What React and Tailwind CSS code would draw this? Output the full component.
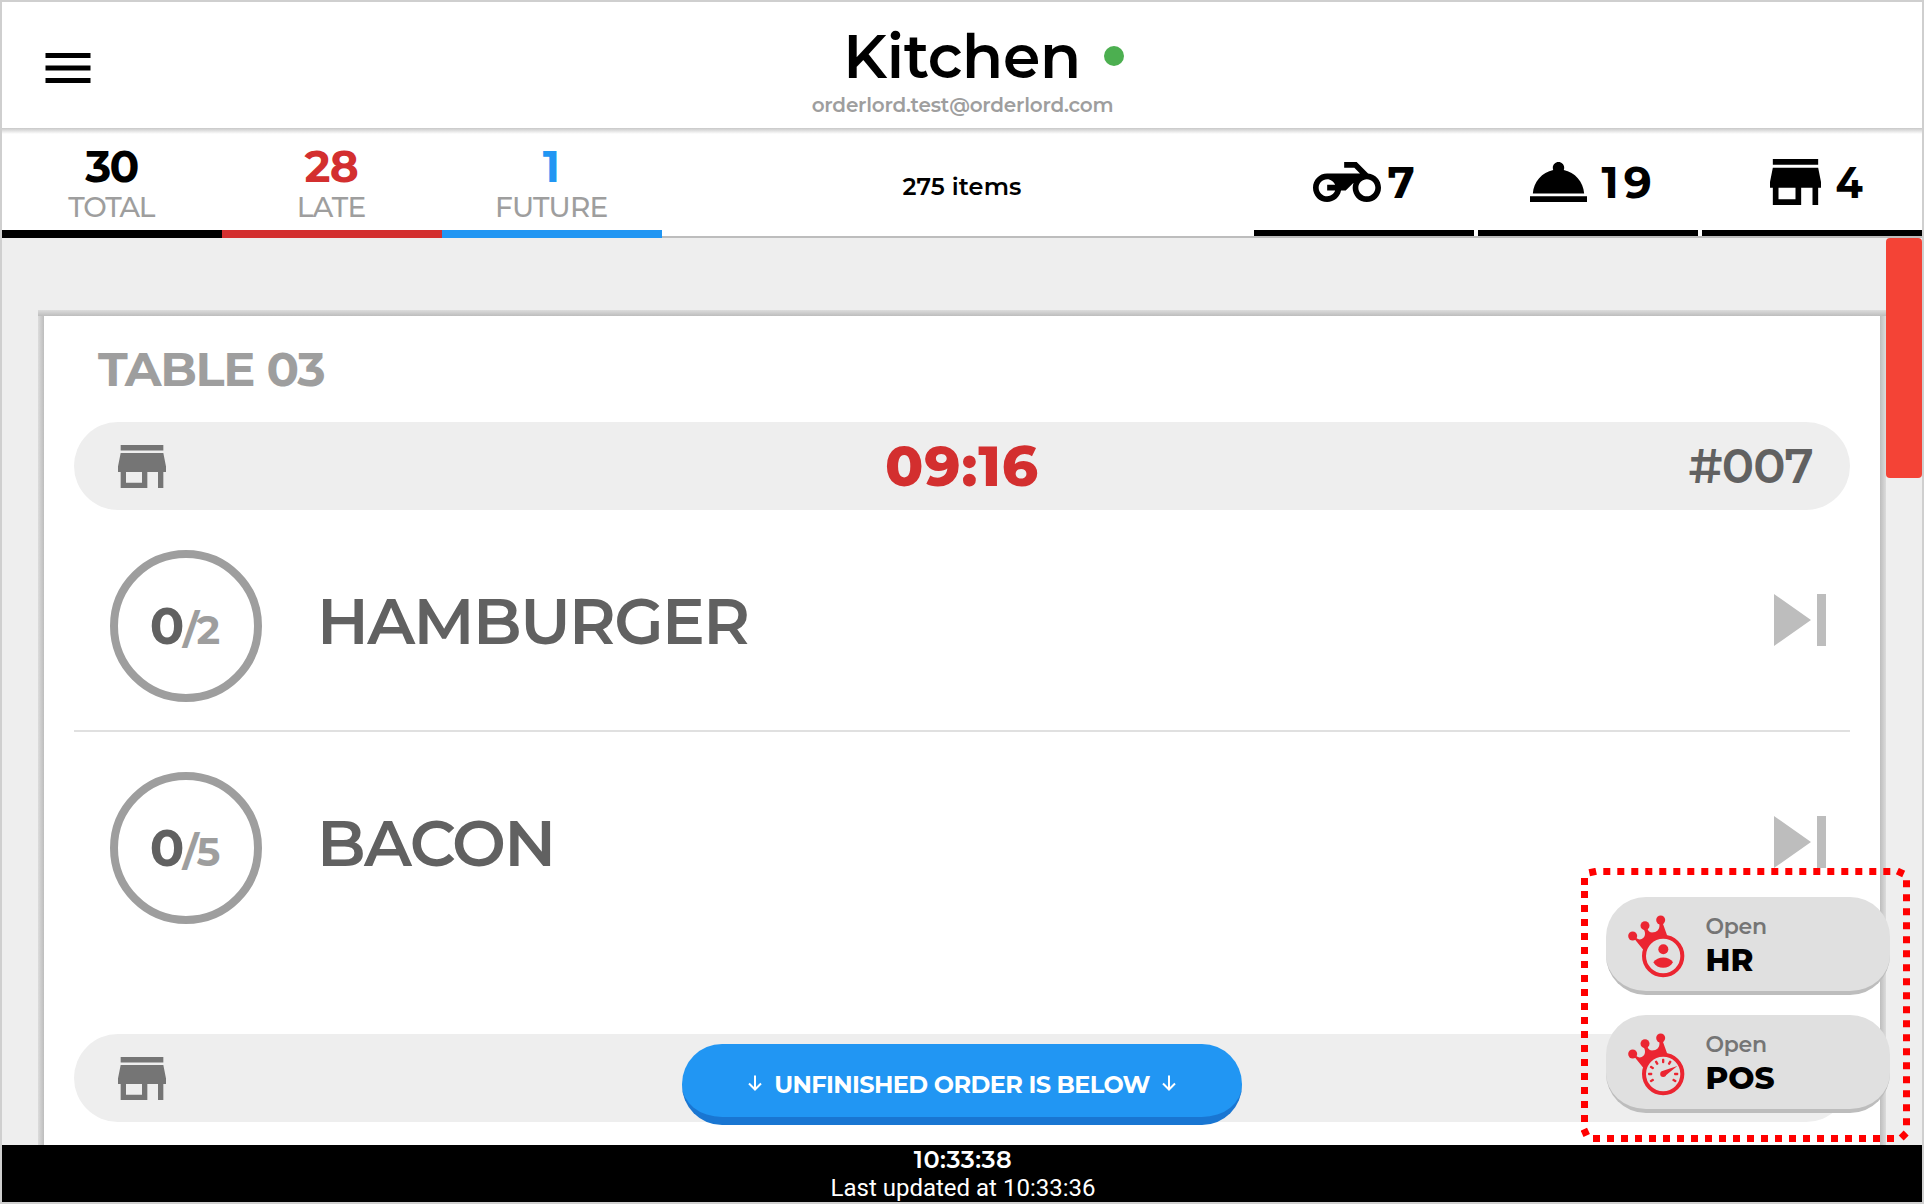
import React from 'react';

const STORE =
  'M20 4H4v2h16V4zm1 10v-2l-1-5H4l-1 5v2h1v6h10v-6h4v6h2v-6h1zm-9 4H6v-4h6v4z';

function StoreIcon({ className }) {
  return (
    <svg viewBox="3 4 18 16" preserveAspectRatio="none" className={className} fill="currentColor">
      <path d={STORE} />
    </svg>
  );
}

function MotorcycleIcon({ className }) {
  return (
    <svg viewBox="0 5 24 14" preserveAspectRatio="none" className={className} fill="currentColor">
      <path d="M19.44 9.03L15.41 5H11v2h3.59l2 2H5c-2.8 0-5 2.2-5 5s2.2 5 5 5c2.46 0 4.45-1.69 4.9-4h1.65l2.77-2.77c-.21.54-.32 1.14-.32 1.77 0 2.8 2.2 5 5 5s5-2.2 5-5c0-2.65-1.97-4.77-4.56-4.97zM7.82 15C7.4 16.15 6.28 17 5 17c-1.63 0-3-1.37-3-3s1.37-3 3-3c1.28 0 2.4.85 2.82 2H5v2h2.82zM19 17c-1.66 0-3-1.34-3-3s1.34-3 3-3 3 1.34 3 3-1.34 3-3 3z" />
    </svg>
  );
}

function RoomServiceIcon({ className }) {
  return (
    <svg viewBox="2 5 20 14" preserveAspectRatio="none" className={className} fill="currentColor">
      <path d="M2 17h20v2H2zm11.84-9.21c.1-.24.16-.51.16-.79 0-1.1-.9-2-2-2s-2 .9-2 2c0 .28.06.55.16.79C6.25 8.6 3.27 11.93 3 16h18c-.27-4.07-3.25-7.4-7.16-8.21z" />
    </svg>
  );
}

function SkipIcon() {
  return (
    <svg viewBox="0 0 52 52" className="mt-[44px] mr-6 ml-auto size-[52px] text-[#bdbdbd]" fill="currentColor">
      <path d="M0 0L37 26L0 52ZM43 0h9v52h-9z" />
    </svg>
  );
}

function ArrowDown() {
  return (
    <svg viewBox="0 0 14 16" className="mt-[31px] h-4 w-3.5" fill="none" stroke="currentColor" strokeWidth="2">
      <path d="M7 0.500v14M1 8.500l6 6 6-6" />
    </svg>
  );
}

function CrownIcon({ children }) {
  return (
    <svg viewBox="203 224 171 189" className="mt-[18px] ml-[21.5px] h-[63px] w-[57px] shrink-0 text-[#eb2531]" fill="currentColor">
      <circle cx="217" cy="287" r="13.5" />
      <circle cx="254" cy="256" r="13.5" />
      <circle cx="301" cy="239" r="13.5" />
      <path d="M222 295L250 330C262 303 290 284 321 287L307 248L297 250C299 263 294 273 280 276C270 278 264 273 262 266L251 268C257 280 254 291 244 296C238 299 231 297 226 291Z" />
      <circle cx="308.5" cy="347" r="57.5" fill="#e0e0e0" stroke="currentColor" strokeWidth="12" />
      {children}
    </svg>
  );
}

function PersonMark() {
  return (
    <>
      <circle cx="309" cy="327" r="15" />
      <path d="M279 365.500C291 346.500 327 346.500 338 365.500C326 387.500 291 387.500 279 365.500Z" />
    </>
  );
}

const TICKS = [150, 180, 210, 240, 270, 300, 0, 30];

function GaugeMark() {
  return (
    <>
      {TICKS.map((a) => (
        <rect key={a} x="341" y="343.500" width="13" height="7" rx="2.500" transform={`rotate(${a} 308.5 347)`} />
      ))}
      <path d="M351 323L304 339L308 353L315 352Z" />
      <circle cx="308.500" cy="347" r="9" />
    </>
  );
}

function StatTab({ value, label, className, tone, tight, labelTight }) {
  return (
    <div className={`flex w-[220px] flex-col items-center border-b-8 pt-2.5 pr-[1.4px] leading-none ${className}`}>
      <div className={`text-[44px] font-bold ${tone} ${tight}`}>{value}</div>
      <div className={`mt-[5px] text-[28px] font-medium text-[#9e9e9e] ${labelTight}`}>{label}</div>
    </div>
  );
}

function OrderBar({ time, number }) {
  return (
    <div className="grid h-[88px] shrink-0 grid-cols-[1fr_auto_1fr] items-center rounded-full bg-[#eeeeee] px-[37px] leading-none">
      <StoreIcon className="ml-[7px] h-[43px] w-12 text-[#757575]" />
      <div className="text-[56px] font-extrabold tracking-[0.9px] text-[#d32f2f]">{time}</div>
      <div className="justify-self-end text-[48px] font-semibold tracking-[-0.8px] text-[#616161]">{number}</div>
    </div>
  );
}

function ItemRow({ total, name, className }) {
  return (
    <div className={`flex shrink-0 items-start pt-10 pl-9 leading-none ${className}`}>
      <div className="flex size-[152px] shrink-0 items-center justify-center rounded-full border-8 border-[#9e9e9e] pt-px pr-1 font-bold">
        <div className="flex items-baseline">
          <span className="text-[51px] tracking-[-1.5px] text-[#616161]">0</span>
          <span className="text-[40px] tracking-[-2px] text-[#9e9e9e]">/{total}</span>
        </div>
      </div>
      <div className="mt-[39px] ml-[55px] text-[64px] font-semibold tracking-[-1.6px] text-[#616161]">{name}</div>
      <SkipIcon />
    </div>
  );
}

function AppButton({ name, children }) {
  return (
    <div className="flex h-[98px] w-[284px] items-start rounded-[40px] border-b-4 border-[#bdbdbd] bg-[#e0e0e0]">
      <CrownIcon>{children}</CrownIcon>
      <div className="pt-[19px] pl-[21px] leading-none">
        <div className="text-[22px] font-semibold tracking-[-0.27px] text-[#757575]">Open</div>
        <div className="mt-[7px] text-[31px] font-extrabold text-black">{name}</div>
      </div>
    </div>
  );
}

function DottedFrame() {
  return (
    <svg viewBox="1581 868 329 274" className="absolute top-[866px] left-[1579px] h-[274px] w-[329px]" fill="none" stroke="#ff0000" strokeWidth="7" strokeDasharray="7 7">
      <path d="M1603.300 871.500H1891M1593 1138.500H1894.500M1584.500 878V885M1584.500 891V1122M1906.500 880.300V1126" />
      <g fill="#ff0000" stroke="none">
        <rect x="1589.200" y="868.500" width="7" height="7" transform="rotate(-12 1592.700 872)" />
        <rect x="1897" y="869" width="7" height="7" transform="rotate(25 1900.500 872.500)" />
        <rect x="1900.200" y="1132" width="7" height="7" transform="rotate(45 1903.700 1135.500)" />
        <rect x="1581.800" y="1128.800" width="7" height="7" transform="rotate(-24 1585.300 1132.300)" />
      </g>
    </svg>
  );
}

export default function App() {
  return (
    <div className="relative flex h-[1204px] w-[1924px] flex-col overflow-hidden border-2 border-[#cfcfcf] bg-white font-['Montserrat',sans-serif] text-black">
      <header className="grid h-[126px] shrink-0 grid-cols-[300px_1fr_300px] leading-none">
        <svg viewBox="0 0 24 24" className="mt-9 ml-9 size-[60px]" fill="currentColor">
          <path d="M3 18h18v-2H3v2zm0-5h18v-2H3v2zm0-7v2h18V6H3z" />
        </svg>
        <div className="flex flex-col items-center pt-[25px]">
          <div className="relative text-[60px] font-semibold tracking-[-0.3px]">
            Kitchen
            <span className="absolute top-[19px] -right-[43px] size-5 rounded-full bg-[#4caf50]" />
          </div>
          <div className="mt-2 pl-px text-[20px] font-semibold tracking-[-0.2px] text-[#9e9e9e]">orderlord.test@orderlord.com</div>
        </div>
      </header>

      <div className="h-1.5 shrink-0 bg-linear-to-b from-[#c8c8c8] to-white" />
      <div className="flex h-[104px] shrink-0">
        <StatTab value="30" label="TOTAL" className="border-black" tone="text-black" tight="tracking-[-1.8px]" labelTight="tracking-[-1.2px]" />
        <StatTab value="28" label="LATE" className="border-[#d32f2f]" tone="text-[#d32f2f]" tight="tracking-[-0.7px]" labelTight="tracking-[-0.6px]" />
        <StatTab value="1" label="FUTURE" className="border-[#2196f3]" tone="text-[#2196f3]" tight="tracking-normal" labelTight="tracking-[-0.7px]" />
        <div className="flex flex-1 border-b-2 border-[#bdbdbd] leading-none">
          <div className="flex flex-1 justify-center pt-[41px] pl-2 text-[24px] font-semibold tracking-[0.1px]">275 items</div>
          <div className="flex gap-1 text-[44px] font-bold">
            <div className="flex w-[220px] items-start border-b-[6px] border-black pl-[59px]">
              <MotorcycleIcon className="mt-7 h-10 w-[68px]" />
              <span className="mt-[26px] ml-[6.5px]">7</span>
            </div>
            <div className="flex w-[220px] items-start border-b-[6px] border-black pl-[51.5px]">
              <RoomServiceIcon className="mt-7 h-10 w-[57px]" />
              <span className="mt-[26px] ml-[15px] tracking-[5px]">19</span>
            </div>
            <div className="flex w-[220px] items-start border-b-[6px] border-black pl-[67.5px]">
              <StoreIcon className="mt-[25px] h-[46px] w-[51px]" />
              <span className="mt-[26px] ml-[13px] scale-x-[0.9]">4</span>
            </div>
          </div>
        </div>
      </div>

      <main className="flex h-[907px] shrink-0 overflow-hidden bg-[#eeeeee] pl-9">
        <div className="flex flex-1 flex-col pt-[72px]">
          <div className="h-1.5 shrink-0 bg-linear-to-b from-[#dcdcdc] to-[#bdbdbd]" />
          <div className="flex flex-1">
            <div className="w-1.5 bg-linear-to-r from-[#dcdcdc] to-[#bdbdbd]" />
            <div className="flex h-[829px] flex-1 flex-col overflow-hidden bg-white px-[30px]">
              <div className="mt-[29px] mb-[29px] shrink-0 pl-6 text-[48px] leading-none font-bold tracking-[-1.3px] text-[#9e9e9e]">TABLE 03</div>
              <OrderBar time="09:16" number="#007" />
              <ItemRow total="2" name="HAMBURGER" className="h-[222px] border-b-2 border-[#e0e0e0]" />
              <ItemRow total="5" name="BACON" className="h-[302px]" />
              <OrderBar />
            </div>
            <div className="w-1.5 bg-linear-to-l from-[#dcdcdc] to-[#bdbdbd]" />
          </div>
        </div>
        <div className="w-9">
          <div className="h-60 rounded bg-[#f44336]" />
        </div>
      </main>

      <footer className="flex flex-1 flex-col items-center bg-black pt-[3px] pl-0.5 text-[24px] leading-none text-white">
        <div className="font-semibold tracking-[0.5px]">10:33:38</div>
        <div className="mt-1 font-['Roboto',sans-serif]">Last updated at 10:33:36</div>
      </footer>

      <div className="absolute top-[1042px] left-[680px] flex h-[81px] w-[560px] items-start justify-center gap-3 rounded-[40px] border-b-8 border-[#1976d2] bg-[#2196f3] leading-none text-white">
        <ArrowDown />
        <span className="pt-[29px] text-[24px] font-bold tracking-[-0.6px]">UNFINISHED ORDER IS BELOW</span>
        <ArrowDown />
      </div>

      <div className="absolute top-[895px] left-[1604px] flex flex-col gap-5">
        <AppButton name="HR">
          <PersonMark />
        </AppButton>
        <AppButton name="POS">
          <GaugeMark />
        </AppButton>
      </div>
      <DottedFrame />
    </div>
  );
}
